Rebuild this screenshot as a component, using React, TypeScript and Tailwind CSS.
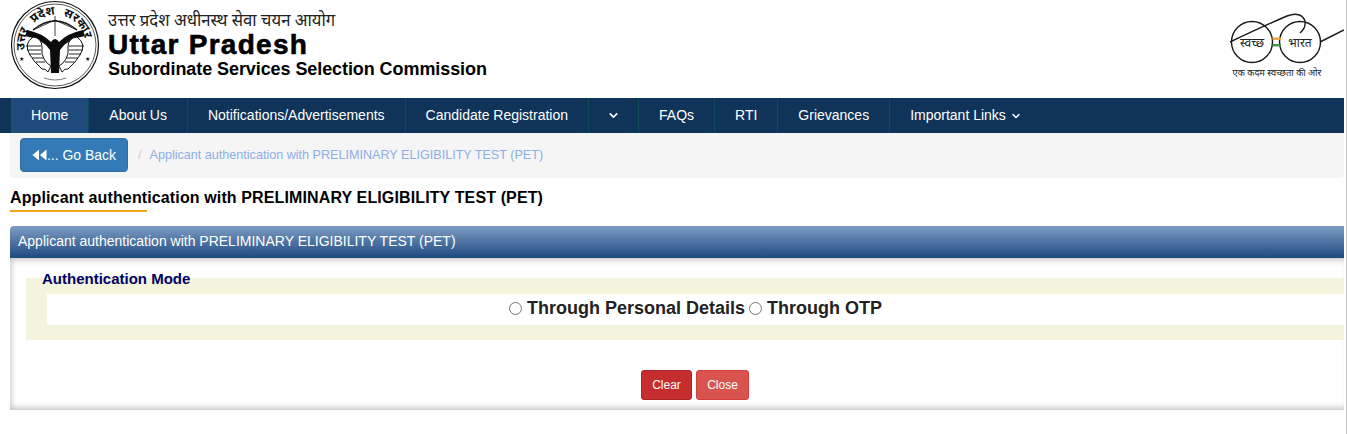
import { ChevronDown } from 'lucide-react'

const navItems = ['About Us', 'Notifications/Advertisements', 'Candidate Registration']

function Fish({ flip }: { flip?: boolean }) {
  return (
    <g transform={flip ? 'translate(90 0) scale(-1 1)' : undefined}>
      <path d="M23 37 Q32 38 32 47 Q31 54 34 59 Q37 64 41 66 L38 72 Q35 68 32 69 Q24 62 20 55 Q13 44 23 37 Z" fill="#fff" stroke="#111" strokeWidth="1" />
      <path d="M16 46 H31 M17 50 H31 M19 54 H31 M22 58 H33 M26 62 H35" stroke="#111" strokeWidth="0.9" />
    </g>
  )
}

function Emblem() {
  return (
    <svg width="90" height="90" viewBox="0 0 90 90" className="shrink-0">
      <circle cx="45" cy="45" r="43.5" fill="none" stroke="#111" strokeWidth="1.2" />
      <circle cx="45" cy="45" r="41" fill="none" stroke="#111" strokeWidth="0.7" />
      <defs>
        <path id="emblem-arc" d="M15.5 53 A30.5 30.5 0 1 1 74.5 53" />
      </defs>
      <text fontSize="12" fontWeight="700" fill="#111" wordSpacing="5" fontFamily="'Noto Sans', 'Liberation Sans', sans-serif">
        <textPath href="#emblem-arc" startOffset="3">उत्तर प्रदेश सरकार</textPath>
      </text>
      {/* bow */}
      <path d="M23 30 Q45 12 67 30" fill="none" stroke="#111" strokeWidth="1.3" />
      <path d="M23 30 L45 20 L67 30 M45 16 V36" fill="none" stroke="#111" strokeWidth="0.8" />
      {/* the forked staff */}
      <path d="M17 30 Q32 33 41 42 Q45 36 49 42 Q58 33 73 30 L75 36 Q57 39 50 50 L49 73 L41 73 L40 50 Q33 39 15 36 Z" fill="#0c0c0c" />
      <Fish />
      <Fish flip />
      <text x="9" y="61" fontSize="6" fill="#111" fontFamily="'DejaVu Sans', sans-serif">★</text>
      <text x="75" y="61" fontSize="6" fill="#111" fontFamily="'DejaVu Sans', sans-serif">★</text>
      <path d="M34 78 Q45 82 56 78" fill="none" stroke="#222" strokeWidth="0.6" />
    </svg>
  )
}

function SwachhBharat() {
  return (
    <svg width="119" height="84" viewBox="0 0 119 84" className="shrink-0">
      <circle cx="27" cy="38" r="20.5" fill="none" stroke="#1a1a1a" strokeWidth="1.4" />
      <circle cx="75" cy="38" r="20.5" fill="none" stroke="#1a1a1a" strokeWidth="1.4" />
      <path d="M5 38 Q41 21 62 12 Q76 7 80 17 Q81 24 75 29" fill="none" stroke="#1a1a1a" strokeWidth="1.4" />
      <path d="M95 38 L119 26" fill="none" stroke="#1a1a1a" strokeWidth="1.4" />
      <rect x="47.5" y="33.5" width="8.5" height="2.4" fill="#f2a33a" />
      <rect x="47.5" y="40" width="8.5" height="2.4" fill="#3d9a3f" />
      <text x="27" y="43" textAnchor="middle" fontSize="12" fill="#222" fontFamily="'Noto Sans', serif">स्वच्छ</text>
      <text x="75" y="43" textAnchor="middle" fontSize="12" fill="#222" fontFamily="'Noto Sans', serif">भारत</text>
      <text x="52" y="72" textAnchor="middle" fontSize="9.3" fill="#222" fontFamily="'Noto Sans', serif">एक कदम स्वच्छता की ओर</text>
    </svg>
  )
}

export default function App() {
  return (
    <div className="min-h-[434px] border-r border-[#c8c8c8] bg-white pr-[2px] font-['Liberation_Sans',Arial,sans-serif] text-[14px] text-[#333]">
      {/* header */}
      <div className="flex h-[98px] justify-between">
        <div className="flex">
          <div className="ml-[10px]"><Emblem /></div>
          <div className="ml-[8px] pt-[10px] text-black">
            <p className="h-[20px] text-[16.7px] leading-[20px] text-[#222] font-['Noto_Sans','Liberation_Sans',sans-serif]">उत्तर प्रदेश अधीनस्थ सेवा चयन आयोग</p>
            <p className="h-[29px] text-[28px] font-bold leading-[30px] tracking-[1.27px] [-webkit-text-stroke:0.6px_#000]">Uttar Pradesh</p>
            <p className="text-[18px] font-bold leading-[21px] tracking-[-0.08px]">Subordinate Services Selection Commission</p>
          </div>
        </div>
        <div className="pt-[4px]"><SwachhBharat /></div>
      </div>

      {/* nav */}
      <nav className="flex h-[35px] bg-[#10335a] pl-[11px] leading-[35px] text-white">
        <a className="border-r border-[#0e4a58] bg-[#1f4a7c] px-5">Home</a>
        {navItems.map(item => (
          <a key={item} className="border-r border-[#0e4a58] px-5">{item}</a>
        ))}
        <a className="flex w-[50px] items-center justify-center border-r border-[#0e4a58]">
          <ChevronDown size={13} strokeWidth={3} />
        </a>
        <a className="border-r border-[#0e4a58] px-5">FAQs</a>
        <a className="border-r border-[#0e4a58] px-5">RTI</a>
        <a className="border-r border-[#0e4a58] px-5">Grievances</a>
        <a className="flex items-center gap-1 px-5">Important Links <ChevronDown size={12} strokeWidth={3} /></a>
      </nav>

      {/* breadcrumb */}
      <div className="ml-[10px] flex h-[45px] items-start rounded-b bg-[#f5f5f5] pl-[10px] pt-[5px]">
        <button className="flex h-[34px] w-[108px] items-center justify-center rounded border border-[#2e6da4] bg-[#337ab7] text-white">
          <svg width="15" height="12" viewBox="0 0 15 12" className="shrink-0">
            <path d="M7 0.5 V11.5 L0.5 6 Z M14.5 0.5 V11.5 L8 6 Z" fill="#fff" />
          </svg>
          ... Go Back
        </button>
        <span className="ml-[10px] text-[12.6px] leading-[34px] text-[#ccc]">/</span>
        <span className="ml-[8px] text-[12.6px] leading-[34px] text-[#8eaee6]">Applicant authentication with PRELIMINARY ELIGIBILITY TEST (PET)</span>
      </div>

      {/* page title */}
      <div className="ml-[10px] h-[48px] pt-[11px]">
        <h1 className="h-[21px] text-[16px] font-bold leading-[18px] tracking-[0.125px] text-black">Applicant authentication with PRELIMINARY ELIGIBILITY TEST (PET)</h1>
        <div className="h-[2px] w-[137px] bg-[#f0a81e]" />
      </div>

      {/* panel */}
      <div className="ml-[10px]">
        <div className="h-[32px] rounded-tl bg-gradient-to-b from-[#7e9dc3] to-[#1e4a80] pl-[8px] text-[14px] leading-[30px] text-white">
          Applicant authentication with PRELIMINARY ELIGIBILITY TEST (PET)
        </div>
        <div className="h-[152px] bg-white pl-[16px] pt-[12px] shadow-[inset_5px_6px_6px_-4px_#c4c4c4,inset_0_-6px_6px_-4px_#c0c0c0]">
          <fieldset className="h-[70px] pt-0">
            <legend className="relative z-10 ml-[16px] text-[15px] font-bold leading-[17px] text-[#000066]">Authentication Mode</legend>
            <div className="-mt-[9px] h-[62px] bg-[#f4f4dc] pl-[21px] pt-[16px]">
              <div className="flex h-[31px] items-center justify-center gap-[4px] bg-white pb-[3px] text-[18px] font-bold text-[#222]">
                <span className="h-[13px] w-[13px] rounded-full border border-[#767676] bg-white" />
                <span className="ml-[1px]">Through Personal Details</span>
                <span className="h-[13px] w-[13px] rounded-full border border-[#767676] bg-white" />
                <span className="ml-[1px]">Through OTP</span>
              </div>
            </div>
          </fieldset>
          <div className="mt-[30px] flex justify-center gap-[4px] pl-[20px] text-[12px] text-white">
            <button className="h-[30px] w-[51px] rounded-[3px] border border-[#a82424] bg-[#c52d2f]">Clear</button>
            <button className="h-[30px] w-[53px] rounded-[3px] border border-[#d43f3a] bg-[#d9534f]">Close</button>
          </div>
        </div>
      </div>
    </div>
  )
}
